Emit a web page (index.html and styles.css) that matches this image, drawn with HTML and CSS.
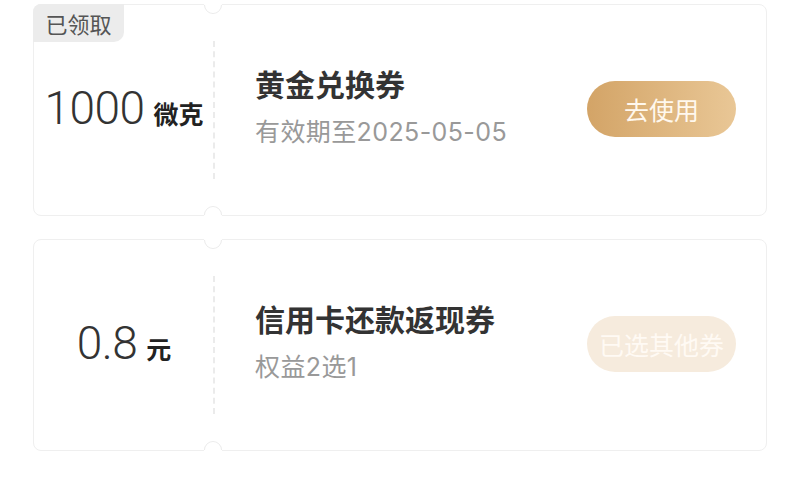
FILE: index.html
```html
<!DOCTYPE html>
<html lang="zh-CN">
<head>
  <meta charset="UTF-8">
  <title>我的券</title>
  <link rel="stylesheet" href="styles.css">
</head>
<body>
  <div class="list">

    <div class="coupon">
      <span class="tag">已领取</span>
      <div class="amount">
        <span class="value"><span class="num">1000</span><span class="unit">微克</span></span>
      </div>
      <div class="info">
        <div class="text">
          <h2 class="title">黄金兑换券</h2>
          <p class="sub">有效期至2025-05-05</p>
        </div>
        <button class="btn">去使用</button>
      </div>
    </div>

    <div class="coupon">
      <div class="amount">
        <span class="value"><span class="num">0.8</span><span class="unit">元</span></span>
      </div>
      <div class="info">
        <div class="text">
          <h2 class="title">信用卡还款返现券</h2>
          <p class="sub">权益2选1</p>
        </div>
        <button class="btn disabled">已选其他券</button>
      </div>
    </div>

  </div>
</body>
</html>
```

FILE: styles.css
```css
* {
  box-sizing: border-box;
}

body {
  margin: 0;
  background: #fff;
  font-family: "Noto Sans CJK SC", "Noto Sans", sans-serif;
  color: #333;
}

.list {
  padding: 4px 33px 0;
  display: flex;
  flex-direction: column;
  gap: 23px;
}

.coupon {
  position: relative;
  display: flex;
  width: 734px;
  height: 212px;
  background: #fff;
  border: 1px solid #efefef;
  border-radius: 8px;
}

.tag {
  position: absolute;
  top: -1px;
  left: -1px;
  width: 91px;
  height: 38px;
  background: #ececec;
  color: #555;
  font-size: 22px;
  line-height: 38px;
  text-align: center;
  border-radius: 8px 0 10px 0;
}

.amount {
  position: relative;
  width: 180px;
  flex-shrink: 0;
  display: flex;
  align-items: center;
  justify-content: center;
  padding-bottom: 5px;
}

/* half-circle notches on the tear line */
.amount::before,
.amount::after {
  content: "";
  position: absolute;
  right: -8px;
  width: 16px;
  height: 16px;
  border-radius: 50%;
  background: #fff;
  border: 1px solid transparent;
  transform: rotate(-45deg);
}

.amount::before {
  top: -9px;
  border-bottom-color: #ebebeb;
  border-left-color: #ebebeb;
}

.amount::after {
  bottom: -9px;
  border-top-color: #ebebeb;
  border-right-color: #ebebeb;
}

.value {
  font-family: Roboto, "Noto Sans CJK SC", sans-serif;
  font-size: 46px;
  line-height: 46px;
  white-space: nowrap;
}

.num {
  font-weight: 300;
  color: #333;
  letter-spacing: -0.5px;
}

.unit {
  font-family: "Noto Sans CJK SC", sans-serif;
  font-size: 25px;
  line-height: 1;
  font-weight: 700;
  color: #222;
  margin-left: 9px;
}

.info {
  position: relative;
  flex: 1;
  display: flex;
  align-items: center;
  justify-content: space-between;
  padding: 0 30px 0 41px;
}

.info::before {
  content: "";
  position: absolute;
  left: -1px;
  top: 36px;
  bottom: 36px;
  border-left: 2px dashed #ebebeb;
}

.text {
  margin-bottom: 8px;
}

.title {
  margin: 0;
  font-size: 30px;
  font-weight: 700;
  color: #333;
  line-height: 40px;
}

.sub {
  margin: 12px 0 0;
  font-family: Inter, "Noto Sans CJK SC", sans-serif;
  font-size: 25px;
  letter-spacing: 0.4px;
  color: #999;
  line-height: 34px;
}

.btn {
  width: 149px;
  height: 56px;
  border: none;
  border-radius: 28px;
  background: linear-gradient(90deg, #d3a467, #e9c796);
  color: #fff8ee;
  font-family: inherit;
  font-size: 25px;
  padding: 0;
  margin-top: -2px;
}

.btn.disabled {
  background: #f6ebdd;
  color: #fffaf4;
}
```
